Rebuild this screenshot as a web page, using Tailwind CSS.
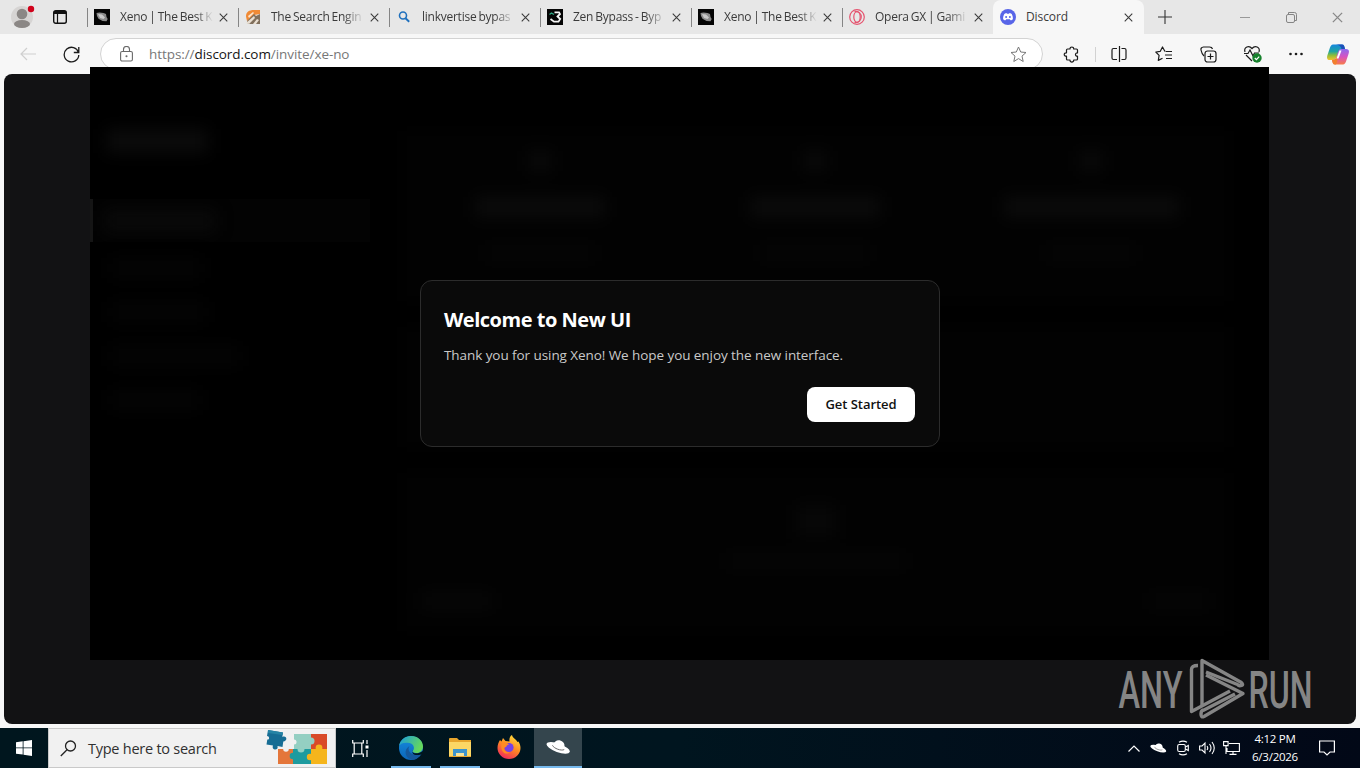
<!DOCTYPE html>
<html lang="en">
<head>
  <meta charset="UTF-8">
  <title>Discord</title>
  <script src="https://cdn.jsdelivr.net/npm/@tailwindcss/browser@4"></script>
</head>
<body class="relative w-[1360px] h-[768px] overflow-hidden bg-[#f7f7f7] font-['Open_Sans','Noto_Sans',sans-serif] text-[#3b3b3b]">
  <!-- shared shapes -->
  <svg class="hidden">
    <symbol id="close" viewBox="0 0 10 10"><path d="M.8.8l8.4 8.4M9.2.8L.8 9.2" fill="none" stroke="currentColor" stroke-width="1.2"/></symbol>
    <symbol id="xeno" viewBox="0 0 16 16">
      <path d="M0 0h16v16H0z" fill="#050505"/>
      <path d="M2.500 4l3-.5 4 .5 2.500 1 .5 3 1.200 2-1.200 2.200-4-.2-4-2.200L3 7z" fill="#8a8a8a"/>
      <path d="M4 5l4 .5 3 3-1.500 1.500-3.500-1z" fill="#c9c9c9"/>
    </symbol>
    <symbol id="hat" viewBox="0 0 26 18">
      <g transform="rotate(20 13 9)">
        <ellipse cx="13" cy="10" rx="12.800" ry="4.400" fill="#fff"/>
        <path d="M7 9.500C7 4 9.500 2 13 2s6 2 6 7.500c-3 2.400-9 2.400-12 0z" fill="#fff"/>
        <path d="M6.500 9.500c2.500 2.600 10.500 2.600 13 0" fill="none" stroke="#555" stroke-width=".8"/>
      </g>
    </symbol>
  </svg>

  <div class="flex h-full flex-col">
    <!-- tab strip -->
    <header class="flex h-[34px] shrink-0 bg-[#e7e7e7] text-[12px] tracking-[-0.25px] [word-spacing:-0.8px]">
      <div class="flex w-[87px] items-center">
        <svg class="ml-[11px] h-[24px] w-[24px]" viewBox="0 0 24 24">
          <circle cx="11" cy="12" r="11" fill="#d6d4d3"/>
          <circle cx="11" cy="9" r="5.300" fill="#8b8785"/>
          <ellipse cx="11" cy="19" rx="8" ry="4" fill="#8b8785"/>
          <circle cx="20" cy="4" r="3.200" fill="#d0021b"/>
        </svg>
        <svg class="ml-[18px] h-[14px] w-[14px]" viewBox="0 0 14 14" fill="none" stroke="#111">
          <rect x=".7" y=".7" width="12.600" height="12.600" rx="2" stroke-width="1.400"/>
          <path d="M1 2.500h12" stroke-width="3"/><path d="M4.500 3v10" stroke-width="1.200"/>
        </svg>
      </div>

      <div class="flex w-[151px] items-center">
        <i class="h-[19px] w-px bg-[#858585]"></i>
        <svg class="ml-[6px] h-4 w-4"><use href="#xeno"/></svg>
        <span class="ml-[10px] w-[93px] whitespace-nowrap mask-r-from-82% mask-r-to-100%">Xeno | The Best K</span>
        <svg class="ml-[6px] h-[9px] w-[9px]"><use href="#close"/></svg>
      </div>
      <div class="flex w-[151px] items-center">
        <i class="h-[19px] w-px bg-[#858585]"></i>
        <svg class="ml-[6px] h-4 w-4" viewBox="0 0 16 16">
          <path d="M1 7.500C1 3 4 1 9 1h6v4L9 6l-4 4-3 2z" fill="#f08a35"/>
          <path d="M2 12l7-7 2 2 4-2v10H3z" fill="#806f5c"/>
          <path d="M1 14l8-7 1 2-6 6zM8 15l4-5 2 1-3 4z" fill="#e9dfd2"/>
          <path d="M3 7l5-4 1 1-5 5z" fill="#fbe4cd"/>
        </svg>
        <span class="ml-[10px] w-[93px] whitespace-nowrap mask-r-from-78% mask-r-to-100%">The Search Engin</span>
        <svg class="ml-[6px] h-[9px] w-[9px]"><use href="#close"/></svg>
      </div>
      <div class="flex w-[151px] items-center">
        <i class="h-[19px] w-px bg-[#858585]"></i>
        <svg class="ml-[6px] h-4 w-4" viewBox="0 0 16 16" fill="none" stroke="#1f70bd"><circle cx="7" cy="6.500" r="3.500" stroke-width="1.600"/><path d="M9.500 9.300l3.700 3.500" stroke-width="1.900"/></svg>
        <span class="ml-[10px] w-[93px] whitespace-nowrap mask-r-from-78% mask-r-to-100%">linkvertise bypas</span>
        <svg class="ml-[6px] h-[9px] w-[9px]"><use href="#close"/></svg>
      </div>
      <div class="flex w-[151px] items-center">
        <i class="h-[19px] w-px bg-[#858585]"></i>
        <svg class="ml-[6px] h-4 w-4" viewBox="0 0 16 16" fill="none">
          <path d="M0 0h16v16H0z" fill="#050505"/>
          <path d="M2.500 5.500L4.500 4 7 5.500" stroke="#2da683" stroke-width="1.400"/>
          <path d="M7.500 3.300h4.500l1 1.700-2.500 2.500 2.700 2.500-1.700 2.700H7L3.500 10" stroke="#f5f5f5" stroke-width="1.800"/>
        </svg>
        <span class="ml-[10px] w-[93px] whitespace-nowrap mask-r-from-78% mask-r-to-100%">Zen Bypass - Byp</span>
        <svg class="ml-[6px] h-[9px] w-[9px]"><use href="#close"/></svg>
      </div>
      <div class="flex w-[151px] items-center">
        <i class="h-[19px] w-px bg-[#858585]"></i>
        <svg class="ml-[6px] h-4 w-4"><use href="#xeno"/></svg>
        <span class="ml-[10px] w-[93px] whitespace-nowrap mask-r-from-82% mask-r-to-100%">Xeno | The Best K</span>
        <svg class="ml-[6px] h-[9px] w-[9px]"><use href="#close"/></svg>
      </div>
      <div class="flex w-[151px] items-center">
        <i class="h-[19px] w-px bg-[#858585]"></i>
        <svg class="ml-[6px] h-4 w-4" viewBox="0 0 16 16" fill="none" stroke="#e5546f" stroke-width="1.200"><circle cx="8" cy="8" r="7.300"/><ellipse cx="8" cy="8" rx="3.200" ry="5.300"/><path d="M5.500 2.500c9-1 9 12 0 11"/></svg>
        <span class="ml-[10px] w-[93px] whitespace-nowrap mask-r-from-78% mask-r-to-100%">Opera GX | Gami</span>
        <svg class="ml-[6px] h-[9px] w-[9px]"><use href="#close"/></svg>
      </div>
      <div class="flex w-[151px] items-center rounded-t-lg bg-[#f7f7f7]">
        <svg class="ml-[7px] h-4 w-4" viewBox="0 0 16 16">
          <circle cx="8" cy="8" r="8" fill="#5865e8"/>
          <path d="M4.300 5c1-.8 2-.9 2.200-.9l.4.600h2.200l.4-.6c.2 0 1.200.1 2.200.9.800 1.500 1.300 3 1.200 5.200-1 .9-2 1.100-2.400 1.100l-.7-1H6.200l-.7 1c-.4 0-1.400-.2-2.400-1.100C3 8 3.500 6.500 4.300 5z" fill="#fff"/>
          <circle cx="6.100" cy="8" r="1" fill="#5865e8"/><circle cx="9.900" cy="8" r="1" fill="#5865e8"/>
        </svg>
        <span class="ml-[10px] w-[92px] tracking-[-0.1px]">Discord</span>
        <svg class="ml-[6px] h-[9px] w-[9px]"><use href="#close"/></svg>
      </div>
      <div class="flex flex-1 items-center">
        <svg class="ml-[14px] h-[14px] w-[14px]" viewBox="0 0 14 14" stroke="#333" stroke-width="1.100"><path d="M0 7h14M7 0v14"/></svg>
        <svg class="ml-[68px] h-[10px] w-[10px]" viewBox="0 0 10 10" stroke="#999"><path d="M0 5.500h10"/></svg>
        <svg class="ml-[36px] h-[11px] w-[11px]" viewBox="0 0 11 11" fill="none" stroke="#858585"><rect x=".5" y="2.500" width="8" height="8" rx="1.500"/><path d="M2.500 2V.5h6q2 0 2 2v6H9"/></svg>
        <svg class="ml-[35px] h-[11px] w-[11px] text-[#888]"><use href="#close"/></svg>
      </div>
    </header>

    <!-- toolbar -->
    <div class="flex h-10 shrink-0 items-center">
      <svg class="ml-[20px] h-[14px] w-[16px]" viewBox="0 0 16 14" fill="none" stroke="#cfcfcf" stroke-width="1.200"><path d="M16 7H1M7 1L1 7l6 6"/></svg>
      <svg class="ml-[27px] h-[17px] w-[17px]" viewBox="0 0 17 17" fill="none" stroke="#1b1b1b" stroke-width="1.300"><path d="M15.500 6.500A7.300 7.300 0 1 0 15.800 9M15.800 1v5.500h-5"/></svg>
      <div class="ml-[20px] flex h-[32px] w-[943px] items-center rounded-full border border-[#d3d3d3] bg-white">
        <svg class="ml-[19px] h-[16px] w-[13px]" viewBox="0 0 13 16" fill="none" stroke="#696969" stroke-width="1.100"><rect x=".6" y="5.500" width="11.800" height="9.500" rx="1.500"/><path d="M3.500 5.500V3.500a3 3 0 0 1 6 0v2"/><circle cx="6.500" cy="10.300" r=".5" fill="#555"/></svg>
        <span class="ml-[16px] flex-1 text-[13.500px] tracking-[-0.07px] text-[#777]">https://<span class="text-[#151515]">discord.com</span>/invite/xe-no</span>
        <svg class="mr-[15px] h-[17px] w-[17px]" viewBox="0 0 17 17" fill="none" stroke="#777" stroke-linejoin="round"><path d="M8.500 1l2.200 5 5.300.5-4 3.600 1.200 5.400-4.700-2.900-4.700 2.900L5 10.100 1 6.500 6.300 6z"/></svg>
      </div>
      <svg class="ml-[20px] h-[17px] w-[17px]" viewBox="0 0 17 17" fill="none" stroke="#1b1b1b" stroke-width="1.200" stroke-linejoin="round"><path d="M4.500 3H7c-.3-2.700 4-2.700 3.700 0h2.800q1 0 1 1v3c-2.700-.4-2.700 3.600 0 3.200V13q0 1-1 1h-2.800c.3 2.700-4 2.700-3.700 0H4.500q-1 0-1-1v-2.800c-3 .3-3-3.700 0-3.400V4q0-1 1-1z"/></svg>
      <i class="ml-[15px] h-[15px] w-px bg-[#d2d2d2]"></i>
      <svg class="ml-[15px] h-[16px] w-[16px]" viewBox="0 0 16 16" fill="none" stroke="#1b1b1b" stroke-width="1.200"><path d="M8.500 0v16M6 2.500H2.500q-1.500 0-1.500 1.500v8q0 1.500 1.500 1.500H6M10.500 2.500h3q1.500 0 1.500 1.500v8q0 1.500-1.500 1.500h-3"/></svg>
      <svg class="ml-[28px] h-[16px] w-[17px]" viewBox="0 0 17 16" fill="none" stroke="#1b1b1b" stroke-width="1.200" stroke-linejoin="round"><path d="M10.500 5.500L9.700 5 7.500 1 5.300 5.300.8 6l3.300 3.400-.8 5 4.200-2.200M11 5.500h6M10 9h7M11 12.500h6"/></svg>
      <svg class="ml-[28px] h-[17px] w-[17px]" viewBox="0 0 17 17" fill="none" stroke="#1b1b1b" stroke-width="1.200"><rect x="5" y="5" width="11" height="11" rx="2.500"/><path d="M10.500 7.500v6M7.500 10.500h6M12.500 3Q12 1 9.500 1H3.500Q.5 1.500 1 4q.8 4 3 6"/></svg>
      <svg class="ml-[26px] h-[18px] w-[19px]" viewBox="0 0 19 18" fill="none" stroke="#1b1b1b" stroke-width="1.200">
        <path d="M2 7C.5 2 6 0 9 3.500 12 0 17.500 2 16 7M3 10l6 6M1 8.500h4L7 5l3 6 1.500-3H16"/>
        <circle cx="14" cy="13" r="4.700" fill="#16812c" stroke="none"/><path d="M11.800 13l1.600 1.600 2.800-3" stroke="#fff"/>
      </svg>
      <svg class="ml-[27px] h-[4px] w-[14px]" viewBox="0 0 14 4" fill="#1b1b1b"><circle cx="1.500" cy="2" r="1.300"/><circle cx="7" cy="2" r="1.300"/><circle cx="12.500" cy="2" r="1.300"/></svg>
      <svg class="ml-[24px] h-[21px] w-[22px]" viewBox="0 0 22 21">
        <defs>
          <linearGradient id="cpA" x1="0" y1="0" x2="0" y2="1"><stop offset="0" stop-color="#1687e0"/><stop offset=".45" stop-color="#20a5a0"/><stop offset=".7" stop-color="#8fbd3a"/><stop offset="1" stop-color="#f5c32c"/></linearGradient>
          <linearGradient id="cpB" x1="0" y1="0" x2="0" y2="1"><stop offset="0" stop-color="#8a6bf0"/><stop offset=".5" stop-color="#d853c0"/><stop offset="1" stop-color="#f87b48"/></linearGradient>
        </defs>
        <path d="M6 .5h9c2 0 2.500 2 3 4.500h-4L9.500 13c-.6 2-1.500 3-3.500 3H3c-3 0-3.500-2-2.500-5L3 3.500C3.500 2 4.500.5 6 .5z" fill="url(#cpA)"/>
        <path d="M14 5h5c3 0 3.500 2 2.500 5L19 17.500c-.5 1.500-1.500 3-3 3H8c-2 0-2.500-2-3-4.500 3 0 4-1 4.500-3L11 8c.6-2 1.500-3 3-3z" fill="url(#cpB)"/>
        <path d="M9 .5h6c2 0 2.500 2 3 4.500h-3.500c-.5-2.500-2-4-5.500-4.500z" fill="#1d4fb8"/>
        <path d="M5 16c3 0 4-1 4.500-3l.5-1.500c1 2.500 1 5-1 9H8c-2 0-2.500-2-3-4.500z" fill="#f2802f"/>
        <path d="M12.500 6.500h2l-3 8h-2z" fill="#fff"/>
      </svg>
    </div>

    <!-- page area -->
    <main class="mx-1 mb-1 flex-1 rounded-lg bg-[#121214]"></main>

    <!-- taskbar -->
    <footer class="flex h-10 shrink-0 items-stretch bg-linear-to-r from-[#00161e] via-[#00151f] to-[#020817]">
      <div class="flex w-12 items-center justify-center">
        <svg class="h-[16px] w-[16px]" viewBox="0 0 16 16" fill="#fff"><path d="M0 2.200L6.700 1.300v6.200H0zM7.500 1.200L16 0v7.500H7.500zM0 8.300h6.700v6.300L0 13.700zM7.500 8.300H16V16l-8.500-1.200z"/></svg>
      </div>
      <div class="flex w-[288px] items-center border border-[#c9c9c9] bg-[#f1f1f1]">
        <svg class="ml-[11px] h-[17px] w-[17px]" viewBox="0 0 17 17" fill="none" stroke="#222" stroke-width="1.300"><circle cx="10.500" cy="6" r="5"/><path d="M7 9.700L.8 16"/></svg>
        <span class="ml-[11px] mt-px text-[14.500px] tracking-[-0.25px] text-[#303030]">Type here to search</span>
        <svg class="ml-auto mr-[6px] h-[38px] w-[64px]" viewBox="0 0 64 38">
          <path d="M13 20h17v15H13z" fill="#e4763a"/>
          <path d="M29 5h19v16H29z" fill="#94cfc2"/>
          <path d="M46 5h16v16H46z" fill="#d94a28"/>
          <path d="M28 20h18v15H28z" fill="#1e9b9f"/>
          <path d="M46 20h16v15H46z" fill="#f5b51c"/>
          <circle cx="28" cy="27" r="3.300" fill="#1e9b9f"/><circle cx="36" cy="20" r="3.500" fill="#94cfc2"/>
          <circle cx="46" cy="12" r="3.500" fill="#94cfc2"/><circle cx="54" cy="19" r="3.400" fill="#f5b51c"/><circle cx="45" cy="28" r="3.200" fill="#f5b51c"/>
          <circle cx="29" cy="13" r="2.500" fill="#f1f1f1"/><circle cx="21" cy="20" r="2.800" fill="#f1f1f1"/>
          <path d="M3 1l15 2.500-.7 4.500c4.700-2 5.700 4.500 1 4.500l-.8 5.500-5-1c1.500 5-6.500 4.500-4.500-.5l-6.500-1 .8-5C5 11 4.500 7 2 7z" fill="#176d94"/>
          <path d="M3 1l15 2.500-.5 2.500L3 4z" fill="#2684a5"/>
        </svg>
      </div>
      <div class="flex w-[49px] items-center justify-center">
        <svg class="h-[17px] w-[17px]" viewBox="0 0 17 17" fill="none" stroke="#fff" stroke-width="1.200"><path d="M.7 0v3h10.600V0M.7 17v-3h10.600v3M2.200 3v11M9.800 3v11M15 0v4M15 10v7"/><path d="M13.500 5.500h3v3h-3z" fill="#fff" stroke="none"/></svg>
      </div>
      <div class="ml-[6px] flex w-10 items-center justify-center border-b-2 border-[#76b9ed]">
        <svg class="mt-[2px] h-[24px] w-[24px]" viewBox="0 0 24 24">
          <defs>
            <linearGradient id="edA" x1="0" y1="0" x2="1" y2=".4"><stop offset="0" stop-color="#199ce0"/><stop offset="1" stop-color="#65d85c"/></linearGradient>
            <linearGradient id="edB" x1="0" y1="0" x2="0" y2="1"><stop offset="0" stop-color="#168de0"/><stop offset="1" stop-color="#0b65b8"/></linearGradient>
          </defs>
          <circle cx="12" cy="12" r="12" fill="url(#edB)"/>
          <path d="M0 10C1 4 6 0 12 0c7 0 12 5 12 10.500 0 4-3 6.500-6 6.500-3.500 0-5-1.200-4-2.500 2-2 1-6.500-3.500-7.500C6 6 1.500 7 0 10z" fill="url(#edA)"/>
          <path d="M10.500 10c-3 4 1 10.500 11 8.500-2 3-5 5.500-8.500 5.300C6 22 4 14 10.500 10z" fill="#15589c"/>
          <path d="M13.500 14c-1.500 2 1.500 4.300 7 2.700l3.500-1.700v2.700l-2.500 1c-7 1.500-9-1.500-8-4.700z" fill="#00161e"/>
        </svg>
      </div>
      <div class="ml-[9px] flex w-10 items-center justify-center border-b-2 border-[#76b9ed]">
        <svg class="mt-px h-[19px] w-[22px]" viewBox="0 0 22 19"><path d="M0 1q0-1 1-1h7l2 2h12v17H0z" fill="#e8a62d"/><path d="M0 4h22v14H0z" fill="#fcd765"/><path d="M4 11h14v7h-3v-3H7v3H4z" fill="#3d94cc"/><path d="M7 15h8v3H7z" fill="#f7e39b"/></svg>
      </div>
      <div class="ml-[5px] flex w-12 items-center justify-center">
        <svg class="mb-[2px] h-[24px] w-[24px]" viewBox="0 0 24 24">
          <defs><linearGradient id="fx" x1=".8" y1="0" x2=".3" y2="1"><stop offset="0" stop-color="#ffe33d"/><stop offset=".5" stop-color="#ff8a22"/><stop offset="1" stop-color="#f0285c"/></linearGradient></defs>
          <path d="M3 5l1.500 1.500L6 3l2.500 3 4 .5C12 4 13 1 15 0c.5 3 4 4 5.500 7l1-.5C23 9 23.500 11 23.500 13A11.500 11 0 0 1 .5 13C.5 10 1.500 7 3 5z" fill="url(#fx)"/>
          <circle cx="12" cy="12.500" r="4.600" fill="#7542e5"/>
          <path d="M4.500 9c2-2.500 5.500-1.500 7.500.5-2 .5-2.500 1-2.500 2L7 13c0 3 3 5 6 4-4 4-10 0-8.500-8z" fill="#ff8b24"/>
        </svg>
      </div>
      <div class="ml-[1px] flex w-12 items-center justify-center border-b-2 border-[#76b9ed] bg-[#34454d]">
        <svg class="h-[18px] w-[25px]"><use href="#hat"/></svg>
      </div>
      <div class="ml-auto flex items-center text-white">
        <svg class="h-[7px] w-[12px]" viewBox="0 0 12 7" fill="none" stroke="#fff" stroke-width="1.200"><path d="M.5 6.500L6 1l5.500 5.500"/></svg>
        <svg class="ml-[10px] h-[12px] w-[17px]"><use href="#hat"/></svg>
        <svg class="ml-[10px] h-[16px] w-[12px]" viewBox="0 0 12 16" fill="none" stroke="#fff" stroke-width="1.100"><rect x=".7" y="4.500" width="7.600" height="7" rx="1.500"/><path d="M8.500 7l2.800-1.500v5L8.500 9M2 2.300Q6 0 10 2.300M2 13.700q4 2.300 8 0"/></svg>
        <svg class="ml-[10px] h-[14px] w-[16px]" viewBox="0 0 16 14" fill="none" stroke="#fff" stroke-width="1.100"><path d="M.6 5h2.500L6 2v10L3.100 9H.6zM8 5q1.500 2 0 4M10.500 3q3 4 0 8M13 1q4.500 6 0 12"/></svg>
        <svg class="ml-[8px] h-[14px] w-[17px]" viewBox="0 0 17 14" fill="none" stroke="#fff" stroke-width="1.100"><path d="M6 2.500h10.400v8H4V7M10 10.500v3M6.500 13.400h7M.6.600h4.500v4H.6zM3 4.500V13"/></svg>
        <div class="ml-[7px] w-[56px] text-center text-[11.500px] leading-[18px] tracking-[-0.25px]">
          <div>4:12 PM</div>
          <div>6/3/2026</div>
        </div>
        <svg class="ml-[16px] mr-[25px] h-[16px] w-[16px]" viewBox="0 0 16 16" fill="none" stroke="#fff" stroke-width="1.200"><path d="M.6 1h14.800v11H11l-3 3-3-3H.6z"/></svg>
      </div>
    </footer>
  </div>

  <!-- Xeno window -->
  <section class="absolute left-[90px] top-[67px] h-[593px] w-[1179px] overflow-hidden bg-black">
    <!-- dimmed interface behind the dialog -->
    <div class="flex h-full">
      <div class="flex w-[280px] flex-col pt-[62px]">
        <i class="ml-4 h-6 w-[102px] bg-[#0b0b0b] blur-[8px]"></i>
        <div class="mt-[46px] flex h-[43px] items-center border-l-[3px] border-[#161616] bg-[#030303]"><i class="ml-3 h-5 w-[110px] bg-[#0a0a0a] blur-[8px]"></i></div>
        <div class="mt-[16px] flex flex-col gap-[24px] pl-5 blur-[8px]">
          <i class="h-5 w-[92px] bg-[#040404]"></i>
          <i class="h-5 w-[96px] bg-[#040404]"></i>
          <i class="h-5 w-[130px] bg-[#040404]"></i>
          <i class="h-5 w-[90px] bg-[#040404]"></i>
        </div>
      </div>
      <div class="flex flex-1 flex-col gap-[26px] pl-[32px] pr-[40px] pt-[64px] blur-[8px]">
        <div class="flex h-[170px] justify-around bg-[#020202]">
          <div class="flex w-[180px] flex-col items-center pt-5"><i class="h-5 w-6 bg-[#090909]"></i><i class="mt-[26px] h-5 w-[130px] bg-[#0b0b0b]"></i><i class="mt-[28px] h-4 w-[110px] bg-[#050505]"></i></div>
          <div class="flex w-[180px] flex-col items-center pt-5"><i class="h-5 w-6 bg-[#090909]"></i><i class="mt-[26px] h-5 w-[130px] bg-[#0b0b0b]"></i><i class="mt-[28px] h-4 w-[110px] bg-[#050505]"></i></div>
          <div class="flex w-[180px] flex-col items-center pt-5"><i class="h-5 w-6 bg-[#090909]"></i><i class="mt-[26px] h-5 w-[175px] bg-[#0b0b0b]"></i><i class="mt-[28px] h-4 w-[90px] bg-[#050505]"></i></div>
        </div>
        <div class="h-[120px] bg-[#020202]"></div>
        <div class="flex h-[158px] flex-col items-center bg-[#020202] pt-8">
          <i class="h-8 w-10 bg-[#070707]"></i>
          <i class="mt-4 h-4 w-[180px] bg-[#050505]"></i>
          <div class="mt-6 flex w-full justify-between px-5"><i class="h-4 w-[70px] bg-[#070707]"></i><i class="h-4 w-[60px] bg-[#050505]"></i></div>
        </div>
      </div>
    </div>
    <!-- welcome dialog -->
    <div class="absolute left-[330px] top-[213px] flex h-[167px] w-[520px] flex-col rounded-xl border border-[#2c2c2c] bg-[#0a0a0a] py-6 pr-6 pl-[23px]">
      <h1 class="text-[20px] leading-[30px] font-bold tracking-[-0.48px] whitespace-nowrap text-white">Welcome to New UI</h1>
      <p class="mt-[10px] text-[13.500px] leading-[20px] tracking-[-0.07px] whitespace-nowrap text-[#c9c9c9]">Thank you for using Xeno! We hope you enjoy the new interface.</p>
      <button class="mt-[22px] h-[35px] w-[108px] self-end rounded-lg bg-white text-[13px] font-semibold tracking-[-0.05px] whitespace-nowrap text-[#111]">Get Started</button>
    </div>
  </section>

  <!-- watermark -->
  <svg class="absolute left-[1110px] top-[655px] h-[68px] w-[210px]" viewBox="1110 655 210 68" fill="#858585">
    <text x="1118.500" y="708" font-family="Roboto" font-weight="500" font-size="51" textLength="64" lengthAdjust="spacingAndGlyphs">ANY</text>
    <text x="1248.500" y="708" font-family="Roboto" font-weight="500" font-size="51" textLength="64" lengthAdjust="spacingAndGlyphs">RUN</text>
    <g fill="none" stroke="#858585" stroke-width="3.400" stroke-linejoin="round">
      <path d="M1198 665.500q-6.500 0-6.500 4v42l38.500-20.500"/>
      <path d="M1202 706v-45.500l38.500 21.500q3.500 2.500 1 3.500t-4-1L1206 672"/>
      <path d="M1206 675l37 18.500-39 23q-3 1.500-3-2.500t3-4l31-16"/>
    </g>
  </svg>
</body>
</html>
